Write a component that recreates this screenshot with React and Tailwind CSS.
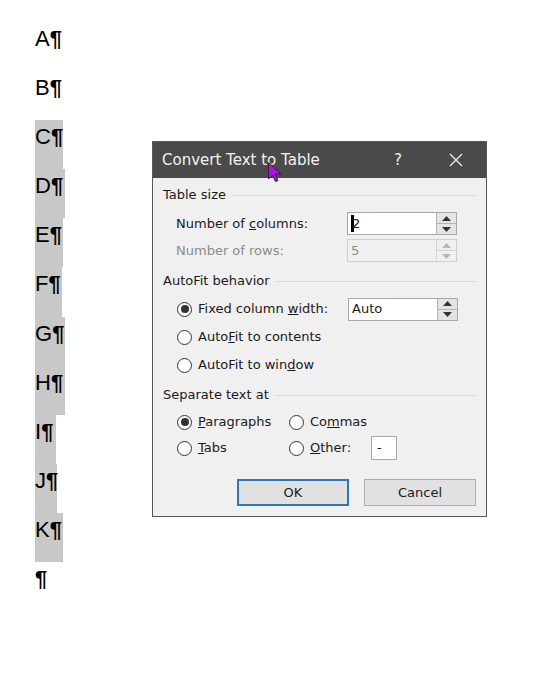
import React from 'react';

const lines = [
  { ch: 'A', hl: false, w: 28 },
  { ch: 'B', hl: false, w: 28 },
  { ch: 'C', hl: true, w: 28 },
  { ch: 'D', hl: true, w: 30 },
  { ch: 'E', hl: true, w: 28 },
  { ch: 'F', hl: true, w: 27 },
  { ch: 'G', hl: true, w: 30 },
  { ch: 'H', hl: true, w: 30 },
  { ch: 'I', hl: true, w: 21 },
  { ch: 'J', hl: true, w: 22 },
  { ch: 'K', hl: true, w: 28 },
  { ch: '', hl: false, w: 14 },
];

function Spin({ disabled }) {
  const tri = disabled ? 'text-[#b8b8b8]' : 'text-[#333]';
  return (
    <div className={`flex flex-col w-[20px] h-full border-l ${disabled ? 'border-[#d4d4d4]' : 'border-[#b4b4b4]'}`}>
      <div className={`flex-1 flex items-center justify-center ${disabled ? 'bg-[#f0f0f0]' : 'bg-[#e4e4e4]'} border-b ${disabled ? 'border-[#d4d4d4]' : 'border-[#b4b4b4]'}`}>
        <svg width="9" height="5" viewBox="0 0 9 5" className={tri}><path d="M4.5 0 L9 5 L0 5 Z" fill="currentColor" /></svg>
      </div>
      <div className={`flex-1 flex items-center justify-center ${disabled ? 'bg-[#f0f0f0]' : 'bg-[#e4e4e4]'}`}>
        <svg width="9" height="5" viewBox="0 0 9 5" className={tri}><path d="M0 0 L9 0 L4.5 5 Z" fill="currentColor" /></svg>
      </div>
    </div>
  );
}

function Radio({ on }) {
  return (
    <div className="w-[15px] h-[15px] rounded-full border border-[#333] bg-white flex items-center justify-center shrink-0">
      {on && <div className="w-[8px] h-[8px] rounded-full bg-[#333]" />}
    </div>
  );
}

function Header({ children, cls }) {
  return (
    <div className={`flex items-center pl-[10px] pr-[10px] ${cls}`}>
      <span className="text-[#1a1a1a]">{children}</span>
      <div className="flex-1 h-px bg-[#dadada] ml-[6px]" />
    </div>
  );
}

export default function App() {
  return (
    <div className="relative w-[546px] h-[688px] bg-white overflow-hidden">
      {/* document */}
      <div className="pt-[22px] pl-[35px] font-['Liberation_Sans',Arial,sans-serif] text-black">
        {lines.map((l, i) => (
          <div
            key={i}
            style={{ width: l.w }}
            className={`h-[49.1px] pt-[5px] text-[22px] leading-[24px] whitespace-nowrap ${l.hl ? 'bg-[#c8c8c8]' : ''}`}
          >
            {l.ch}<span className="font-bold">¶</span>
          </div>
        ))}
      </div>

      {/* dialog */}
      <div className="absolute left-[152px] top-[141px] w-[335px] h-[376px] border border-[#585858] bg-[#f0f0f0] font-['DejaVu_Sans',sans-serif] text-[13px] text-[#1a1a1a] flex flex-col">
        <div className="h-[36px] bg-[#4a4a4a] flex items-center pl-[9px] text-[15px] text-[#f2f2f2]">
          <span className="flex-1">Convert Text to Table</span>
          <span className="w-[20px] text-center mr-[41px]">?</span>
          <svg width="14" height="14" viewBox="0 0 14 14" className="mr-[23px]">
            <path d="M1 1 L13 13 M13 1 L1 13" stroke="#f2f2f2" strokeWidth="1.3" />
          </svg>
        </div>

        <Header cls="h-[34px]">Table size</Header>

        <div className="h-[23px] flex items-center pl-[23px]">
          <span className="w-[171px]">Number of <u>c</u>olumns:</span>
          <div className="w-[110px] h-full border border-[#a8a8a8] bg-white flex">
            <div className="flex-1 flex items-center relative pl-[3px]">
              <div className="w-[3px] h-[17px] bg-black" />
              <span className="ml-[-2px]">2</span>
            </div>
            <Spin />
          </div>
        </div>

        <div className="h-[23px] mt-[4px] flex items-center pl-[23px] text-[#8c8c8c]">
          <span className="w-[171px]">Number of rows:</span>
          <div className="w-[110px] h-full border border-[#cfcfcf] bg-[#f0f0f0] flex">
            <div className="flex-1 flex items-center pl-[3px]">5</div>
            <Spin disabled />
          </div>
        </div>

        <Header cls="h-[33px] pt-[5px]">AutoFit behavior</Header>

        <div className="h-[28px] flex items-center pl-[24px]">
          <Radio on />
          <span className="ml-[6px] w-[150px]">Fixed column <u>w</u>idth:</span>
          <div className="w-[110px] h-[23px] border border-[#a8a8a8] bg-white flex">
            <div className="flex-1 flex items-center pl-[3px]">Auto</div>
            <Spin />
          </div>
        </div>
        <div className="h-[28px] flex items-center pl-[24px]">
          <Radio />
          <span className="ml-[6px]">Auto<u>F</u>it to contents</span>
        </div>
        <div className="h-[28px] flex items-center pl-[24px]">
          <Radio />
          <span className="ml-[6px]">AutoFit to win<u>d</u>ow</span>
        </div>

        <Header cls="h-[30px] pt-[2px]">Separate text at</Header>

        <div className="h-[26px] flex items-center pl-[24px]">
          <Radio on />
          <span className="ml-[6px] w-[91px]"><u>P</u>aragraphs</span>
          <Radio />
          <span className="ml-[6px]">Co<u>m</u>mas</span>
        </div>
        <div className="h-[26px] flex items-center pl-[24px]">
          <Radio />
          <span className="ml-[6px] w-[91px]"><u>T</u>abs</span>
          <Radio />
          <span className="ml-[6px] w-[61px]"><u>O</u>ther:</span>
          <div className="w-[26px] h-[24px] border border-[#a8a8a8] bg-white flex items-center pl-[5px]">-</div>
        </div>

        <div className="mt-[18px] h-[27px] flex pl-[84px] gap-[15px]">
          <div className="w-[112px] h-full border-2 border-[#2a78b8] bg-[#e1e1e1] flex items-center justify-center">OK</div>
          <div className="w-[112px] h-full border border-[#adadad] bg-[#e1e1e1] flex items-center justify-center">Cancel</div>
        </div>
      </div>

      {/* mouse pointer */}
      <svg className="absolute left-[268px] top-[162px]" width="16" height="21" viewBox="0 0 16 21">
        <path d="M0.5 0.5 L0.5 17 L4.5 13 L7.5 19.5 L10 18.5 L7 12 L13 12 Z" fill="#b010e8" stroke="#3a1a40" strokeWidth="1" />
      </svg>
    </div>
  );
}
